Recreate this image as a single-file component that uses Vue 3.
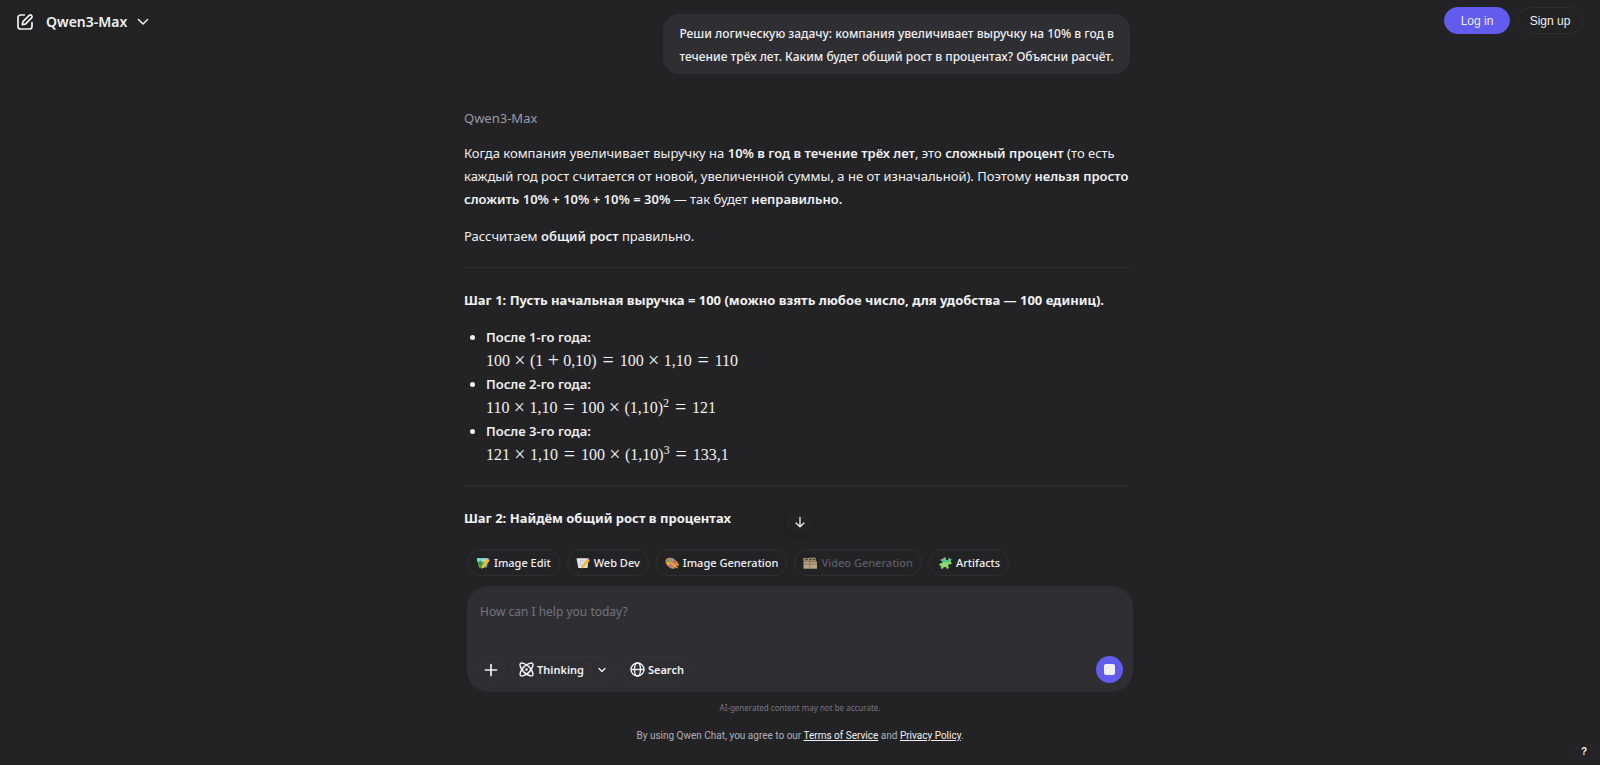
<script setup>
import { ref } from 'vue'

const prompt = ref('')
const chips = [
  { id: 'edit', label: 'Image Edit' },
  { id: 'web', label: 'Web Dev' },
  { id: 'palette', label: 'Image Generation' },
  { id: 'video', label: 'Video Generation', disabled: true },
  { id: 'puzzle', label: 'Artifacts' },
]
</script>

<template>
  <div class="page">
    <header class="side left">
      <button class="icon-btn" aria-label="New chat">
        <svg width="18" height="18" viewBox="0 0 18 18" fill="none" stroke="currentColor" stroke-width="1.7" stroke-linecap="round" stroke-linejoin="round">
          <path d="M8.3 2H4.6A2.6 2.6 0 0 0 2 4.600v8.800A2.600 2.600 0 0 0 4.600 16h8.800a2.600 2.600 0 0 0 2.600-2.600V9.700" />
          <path d="M6.300 11.700l.6-3 6.300-6.300a1.500 1.500 0 0 1 2.200 0l.2.200a1.500 1.500 0 0 1 0 2.200L9.300 11.100z" />
        </svg>
      </button>
      <button class="model">
        Qwen3-Max
        <svg width="12" height="12" viewBox="0 0 12 12" fill="none" stroke="currentColor" stroke-width="1.5" stroke-linecap="round" stroke-linejoin="round"><path d="M1.500 3.500l4.500 4.500L10.500 3.500" /></svg>
      </button>
    </header>

    <main class="center">
      <section class="chat">
        <p class="bubble">Реши логическую задачу: компания увеличивает выручку на 10% в год в<br>течение трёх лет. Каким будет общий рост в процентах? Объясни расчёт.</p>
        <div class="name">Qwen3-Max</div>
        <p>Когда компания увеличивает выручку на <strong>10% в год в течение трёх лет</strong>, это <strong>сложный процент</strong> (то есть<br>каждый год рост считается от новой, увеличенной суммы, а не от изначальной). Поэтому <strong>нельзя просто<br>сложить 10% + 10% + 10% = 30%</strong> — так будет <strong>неправильно.</strong></p>
        <p>Рассчитаем <strong>общий рост</strong> правильно.</p>
        <hr>
        <h3>Шаг 1: Пусть начальная выручка = 100 (можно взять любое число, для удобства — 100 единиц).</h3>
        <ul>
          <li>
            <strong>После 1-го года:</strong>
            <div class="math">100<i class="op">×</i>(1<i class="op">+</i>0,10)<i class="rel">=</i>100<i class="op">×</i>1,10<i class="rel">=</i>110</div>
          </li>
          <li>
            <strong>После 2-го года:</strong>
            <div class="math">110<i class="op">×</i>1,10<i class="rel">=</i>100<i class="op">×</i>(1,10)<sup>2</sup><i class="rel">=</i>121</div>
          </li>
          <li>
            <strong>После 3-го года:</strong>
            <div class="math">121<i class="op">×</i>1,10<i class="rel">=</i>100<i class="op">×</i>(1,10)<sup>3</sup><i class="rel">=</i>133,1</div>
          </li>
        </ul>
        <hr>
        <h3>Шаг 2: Найдём общий рост в процентах</h3>
      </section>

      <section class="dock">
        <button class="scroll" aria-label="Scroll to bottom">
          <svg width="12" height="12" viewBox="0 0 12 12" fill="none" stroke="currentColor" stroke-width="1.3" stroke-linecap="round" stroke-linejoin="round"><path d="M6 1.500v9M2 7l4 3.700L10 7" /></svg>
        </button>
        <div class="chips">
          <button v-for="c in chips" :key="c.id" class="chip" :disabled="c.disabled">
            <svg v-if="c.id === 'edit'" width="14" height="14" viewBox="0 0 14 14">
              <path d="M.8 2.300h11.500L11 11.500H3z" fill="#58b3a5" />
              <path d="M.8 2.300h11.500l-.6 3.700H1.700z" fill="#86d8e8" />
              <path d="M1.700 6l3-1.500 4 5-1.700 2H3z" fill="#3f9a43" />
              <circle cx="8.700" cy="4.200" r="1" fill="#ffe074" />
              <path d="M11.300 2.800l2.400 2-5.900 7-2.800 1 .6-2.900z" fill="#f6b92e" />
              <path d="M11.300 2.800l2.400 2 .3-.9-1.700-1.600z" fill="#e8596e" />
            </svg>
            <svg v-else-if="c.id === 'web'" width="14" height="14" viewBox="0 0 14 14">
              <path d="M.5 2.300h12.300L11.400 12H2.300z" fill="#e4e7ee" />
              <path d="M2.500 4.700h6M2.800 6.800h4M3.100 8.900h3" stroke="#b6bdcb" stroke-width=".8" />
              <path d="M11.300 2.800l2.400 2-5.900 6.700-2.700 1 .6-2.800z" fill="#f6b92e" />
              <path d="M11.300 2.800l2.400 2 .3-.9-1.700-1.500z" fill="#e8596e" />
            </svg>
            <svg v-else-if="c.id === 'palette'" width="14" height="14" viewBox="0 0 14 14">
              <path d="M.5 4.500C1 1.500 6 1 9.500 3.300c3.200 2.200 5 5 4.100 6.500-.8 1.200-2.200-.3-3.200.5-.9.800.2 2-1.200 2.400C6 13.400-.2 9 .5 4.500z" fill="#c98850" />
              <circle cx="3.200" cy="4.500" r="1.300" fill="#54b848" />
              <circle cx="6.600" cy="3.900" r="1.300" fill="#47a9f0" />
              <circle cx="3.200" cy="7.600" r="1.300" fill="#efc12f" />
              <circle cx="5.800" cy="10" r="1.300" fill="#b565e0" />
              <circle cx="9.600" cy="5.800" r="1.200" fill="#ee4b45" />
              <path d="M6 6l6.500 5.300.4 1.300-1.500-.5L5.500 7z" fill="#efb83b" />
            </svg>
            <svg v-else-if="c.id === 'video'" width="14" height="14" viewBox="0 0 14 14">
              <path d="M0 2.200L12.500 1.500l.5 3.700L.5 5.500z" fill="#a08c6f" />
              <path d="M2 3.800l3-.8M6 4l3-1M10 3.800l2-.6" stroke="#40392f" stroke-width="1" />
              <path d="M.5 5.500H14v7.200H.5z" fill="#b8a582" />
              <path d="M.5 8H14M7 5.500v7.200" stroke="#766854" stroke-width=".7" />
            </svg>
            <svg v-else width="14" height="14" viewBox="0 0 14 14">
              <path d="M5.500 3.500c-.6-1.300.4-2.400 1.500-2 1 .4 1 1.300.7 2.200L10 4.500l.8-2.300 2.600 1-.9 2.600c1.300.4 1.500 2 .4 2.500-.8.300-1.200-.2-1.900-.5l-1 2.300c1.200.6 1.100 2.400-.2 2.700-1.100.2-1.500-.8-1.600-1.600l-2.500-.3c-.2 1.300-.9 2.100-2.100 1.800-1.100-.4-1.200-1.700 0-2.300L1.200 9.300 2.100 7c1 .5 2.300.4 2.500-.7.100-1.100-.9-1.500-1.900-1.300L3 3z" fill="#8fdc6c" />
              <path d="M5.500 3.500c-.6-1.300.4-2.400 1.500-2 1 .4 1 1.300.7 2.200L10 4.500l.8-2.300 2.600 1-.9 2.600-4 .6-3.900-.1c.1-1.100-.9-1.500-1.900-1.300L3 3z" fill="#58c585" />
            </svg>
            {{ c.label }}
          </button>
        </div>

        <form class="composer" @submit.prevent>
          <textarea v-model="prompt" rows="1" aria-label="Message" placeholder="How can I help you today?"></textarea>
          <div class="tools">
            <button type="button" class="tool round" aria-label="Add">
              <svg width="14" height="14" viewBox="0 0 14 14" stroke="currentColor" stroke-width="1.700" stroke-linecap="round"><path d="M7 1.500v11M1.500 7h11" /></svg>
            </button>
            <div class="tool split">
              <button type="button" class="plain">
                <svg width="15" height="15" viewBox="0 0 15 15" fill="none" stroke="currentColor" stroke-width="1.500">
                  <path d="M1.500 1.500C2.600.2 7.200 2 10.100 4.900s4.700 7.500 3.400 8.600-5.700-.5-8.600-3.400S.2 2.600 1.500 1.500z" />
                  <path d="M13.500 1.500c1.300 1.100-.5 5.700-3.400 8.600s-7.500 4.700-8.600 3.400.5-5.700 3.400-8.600 7.500-4.700 8.600-3.400z" />
                  <circle cx="7.500" cy="7.500" r=".6" fill="currentColor" />
                </svg>
                Thinking
              </button>
              <button type="button" class="plain more" aria-label="Thinking options">
                <svg width="8" height="8" viewBox="0 0 8 8" fill="none" stroke="currentColor" stroke-width="1.300" stroke-linecap="round" stroke-linejoin="round"><path d="M1 2.500l3 3 3-3" /></svg>
              </button>
            </div>
            <button type="button" class="tool search">
              <svg width="15" height="15" viewBox="0 0 15 15" fill="none" stroke="currentColor" stroke-width="1.400"><circle cx="7.500" cy="7.500" r="6.500" /><ellipse cx="7.500" cy="7.500" rx="3" ry="6.500" /><path d="M1 7.500h13" /></svg>
              Search
            </button>
            <button type="button" class="stop" aria-label="Stop"><span></span></button>
          </div>
        </form>
        <p class="note">AI-generated content may not be accurate.</p>
        <p class="terms">By using Qwen Chat, you agree to our <a href="#terms">Terms of Service</a> and <a href="#privacy">Privacy Policy</a>.</p>
      </section>
    </main>

    <aside class="side right">
      <nav>
        <button class="auth primary">Log in</button>
        <button class="auth">Sign up</button>
      </nav>
      <button class="help" aria-label="Help">?</button>
    </aside>
  </div>
</template>

<style>
body {
  background: #232325;
}
</style>

<style scoped>
* {
  box-sizing: border-box;
}
.page {
  display: grid;
  grid-template-columns: 1fr minmax(0, 666px) 1fr;
  height: 100vh;
  overflow: hidden;
  background: #232325;
  color: #f0f0f2;
  font: 13px/23px "Noto Sans", sans-serif;
}
button {
  margin: 0;
  padding: 0;
  border: 0;
  background: none;
  color: inherit;
  font: inherit;
  white-space: nowrap;
  cursor: pointer;
}
svg {
  display: block;
  flex: none;
}
p, h3, ul {
  margin: 0;
  padding: 0;
}
.left {
  display: flex;
  align-items: flex-start;
  gap: 12px;
  padding: 10px 16px;
}
.icon-btn {
  padding-top: 3px;
}
.model {
  display: flex;
  align-items: center;
  gap: 10px;
  font-size: 14px;
  font-weight: 600;
}
.center {
  display: flex;
  flex-direction: column;
  min-width: 0;
}
.chat {
  flex: 1;
  min-height: 0;
  overflow: hidden;
  display: flex;
  flex-direction: column;
  margin: 0 3px 0 -3px;
  padding-top: 14px;
  white-space: nowrap;
}
.chat > * {
  flex: none;
}
.bubble {
  align-self: flex-end;
  padding: 8px 16px 6px;
  border-radius: 16px;
  background: #2f2f33;
  font-size: 12px;
  font-weight: 500;
}
.name {
  margin: 33px 0 12px;
  color: #9a9aa6;
}
.name + p {
  margin-bottom: 14px;
}
hr {
  width: 100%;
  margin: 19px 0 18px;
  border: 0;
  border-top: 1px solid #2d2d30;
}
strong {
  font-weight: 600;
}
h3 {
  font-size: 13px;
  font-weight: 700;
  line-height: 28px;
}
ul {
  margin: 12px 0 -1px;
  padding-left: 22px;
}
.math {
  font: 16px/24px "Liberation Serif", serif;
}
.math i {
  display: inline-block;
  font-size: 20px;
  line-height: 16px;
  font-style: normal;
  text-align: center;
  vertical-align: -1px;
}
.op {
  width: 20px;
}
.rel {
  width: 23px;
}
.math sup {
  font-size: 12px;
  line-height: 0;
}
.dock {
  position: relative;
  text-align: center;
}
.scroll {
  position: absolute;
  left: 50%;
  bottom: calc(100% + 14px);
  display: grid;
  place-items: center;
  width: 27px;
  height: 27px;
  margin-left: -14px;
  border-radius: 50%;
  background: #232325;
  box-shadow: 0 1px 5px rgba(0, 0, 0, 0.25);
}
.chips {
  display: flex;
  gap: 7px;
}
.chip {
  display: flex;
  align-items: center;
  gap: 4px;
  height: 27px;
  padding: 0 8px;
  border: 1px solid #303034;
  border-radius: 14px;
  font-size: 11px;
  font-weight: 500;
}
.chip:disabled {
  color: #5c5c66;
}
.composer {
  display: flex;
  flex-direction: column;
  justify-content: space-between;
  height: 106px;
  margin-top: 10px;
  padding: 14px 10px 9px;
  border-radius: 22px;
  background: #2f2f33;
}
textarea {
  width: 100%;
  height: 24px;
  padding: 0 3px;
  border: 0;
  outline: 0;
  resize: none;
  overflow: hidden;
  background: none;
  color: inherit;
  font: inherit;
  font-size: 12px;
}
textarea::placeholder {
  color: #72727e;
}
.tools {
  display: flex;
  align-items: center;
  gap: 7px;
}
.tool {
  display: flex;
  align-items: center;
  height: 27px;
  border: 1px solid #343438;
  border-radius: 14px;
  font-size: 11px;
  font-weight: 600;
}
.round {
  justify-content: center;
  width: 27px;
}
.split {
  padding-left: 7px;
}
.plain {
  display: flex;
  align-items: center;
  gap: 3px;
}
.more {
  justify-content: center;
  width: 24px;
  height: 16px;
  margin-left: 6px;
  border-left: 1px solid #343438;
}
.search {
  gap: 3px;
  padding: 0 7px;
}
.stop {
  display: grid;
  place-items: center;
  width: 27px;
  height: 27px;
  margin-left: auto;
  border-radius: 50%;
  background: #615ced;
}
.stop span {
  width: 11px;
  height: 11px;
  border-radius: 2px;
  background: #f0f0f4;
}
.note {
  margin-top: 8px;
  color: #777783;
  font-size: 8px;
  line-height: 16px;
}
.terms {
  margin: 12px 0 21px;
  color: #b0b0ba;
  font-family: Roboto, sans-serif;
  font-size: 10px;
  line-height: 16px;
}
.terms a {
  color: #f0f0f2;
}
.right {
  display: flex;
  flex-direction: column;
  align-items: flex-end;
  justify-content: space-between;
  padding: 7px 17px 4px 0;
}
nav {
  display: flex;
  gap: 7px;
}
.auth {
  width: 66px;
  height: 27px;
  border: 1px solid #2d2d30;
  border-radius: 14px;
  font: 12px "Liberation Sans", sans-serif;
}
.primary {
  border-color: #615ced;
  background: #615ced;
}
.help {
  width: 18px;
  height: 18px;
  margin-right: -10px;
  border: 1px solid #2d2d30;
  border-radius: 50%;
  font: bold 10px/16px "Liberation Sans", sans-serif;
}
</style>
